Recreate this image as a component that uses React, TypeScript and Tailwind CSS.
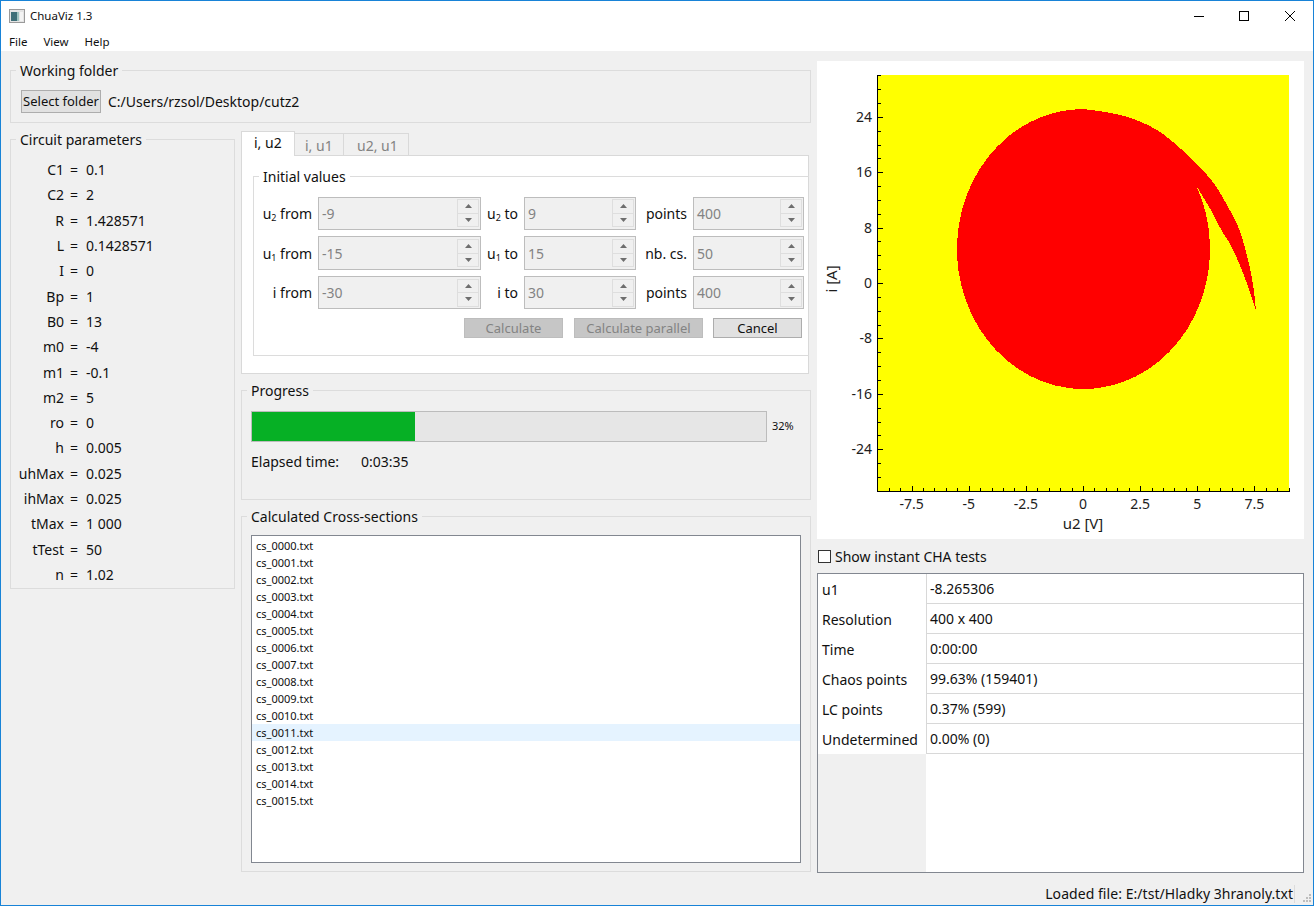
import React from 'react';

const FONT = "font-['Noto_Sans',sans-serif]";

const PARAMS: [string, string][] = [
  ['C1', '0.1'], ['C2', '2'], ['R', '1.428571'], ['L', '0.1428571'], ['I', '0'],
  ['Bp', '1'], ['B0', '13'], ['m0', '-4'], ['m1', '-0.1'], ['m2', '5'], ['ro', '0'],
  ['h', '0.005'], ['uhMax', '0.025'], ['ihMax', '0.025'], ['tMax', '1 000'], ['tTest', '50'], ['n', '1.02'],
];

const INFO: [string, string][] = [
  ['u1', '-8.265306'], ['Resolution', '400 x 400'], ['Time', '0:00:00'],
  ['Chaos points', '99.63% (159401)'], ['LC points', '0.37% (599)'], ['Undetermined', '0.00% (0)'],
];

const FILES = Array.from({ length: 16 }, (_, i) => `cs_${String(i).padStart(4, '0')}.txt`);

// outer edge of the crescent, then back along its inner edge
const OUTER: [number, number][] = [
  [1083.5, 109], [1117, 113], [1147, 124], [1165, 135], [1180, 148], [1193, 160], [1203, 170],
  [1217, 187], [1227, 205], [1237, 223], [1243, 240], [1250, 267], [1254, 290], [1256, 311],
];
const INNER: [number, number][] = [
  [1256, 311], [1252, 297], [1240, 265], [1230, 243], [1222, 232], [1213, 213], [1203, 197], [1196, 185],
];

function smooth(pts: [number, number][]) {
  let d = '';
  for (let i = 1; i < pts.length - 1; i++) {
    const mx = (pts[i][0] + pts[i + 1][0]) / 2;
    const my = (pts[i][1] + pts[i + 1][1]) / 2;
    d += ` Q${pts[i][0]} ${pts[i][1]} ${mx} ${my}`;
  }
  const last = pts[pts.length - 1];
  return `${d} L${last[0]} ${last[1]}`;
}

const REGION = `M1083.5 109${smooth(OUTER)}${smooth(INNER)} A126.5 140 0 1 1 1083.5 109 Z`;

const Group: React.FC<{ title: string; className?: string; children: React.ReactNode }> = ({ title, className, children }) => (
  <fieldset className={`border border-[#dcdcdc] ${className ?? ''}`}>
    <legend className="ml-[5px] px-[4px] h-[16px] leading-[18px]">{title}</legend>
    {children}
  </fieldset>
);

const SpinBox: React.FC<{ value: string; className: string }> = ({ value, className }) => (
  <div className={`flex items-center justify-between border border-[#bdbdbd] bg-[#f0f0f0] pl-[3px] pr-[1px] text-[#838383] ${className}`}>
    <span>{value}</span>
    <div className="flex flex-col w-[22px] h-[28px] border border-[#dedede]">
      <div className="flex-1 flex items-center justify-center border-b border-[#dedede]">
        <svg width="7" height="4" viewBox="0 0 7 4"><path d="M3.5 0 L7 4 L0 4 Z" fill="#6e6e6e" /></svg>
      </div>
      <div className="flex-1 flex items-center justify-center">
        <svg width="7" height="4" viewBox="0 0 7 4"><path d="M0 0 L7 0 L3.5 4 Z" fill="#6e6e6e" /></svg>
      </div>
    </div>
  </div>
);

const SpinLabel: React.FC<{ className: string; children: React.ReactNode }> = ({ className, children }) => (
  <div className={`text-right pr-[6px] whitespace-nowrap ${className}`}>{children}</div>
);

const Sub: React.FC<{ n: number }> = ({ n }) => <sub className="text-[9px]">{n}</sub>;

const Plot: React.FC = () => {
  const px = (v: number) => 1083 + v * 22.85;
  const py = (v: number) => 283 - v * 6.925;
  const xMinor = Array.from({ length: 37 }, (_, i) => -9 + i * 0.5);
  const yMinor = Array.from({ length: 31 }, (_, i) => -30 + i * 2);
  const xMajor = [-7.5, -5, -2.5, 0, 2.5, 5, 7.5];
  const yMajor = [24, 16, 8, 0, -8, -16, -24];
  return (
    <svg width="487" height="478" viewBox="817 61 487 478" className="block bg-white">
      <rect x="878" y="75" width="411" height="416" fill="#ffff00" />
      <path shapeRendering="crispEdges" fill="#ff0000" d={REGION} />
      <g fill="#000000" shapeRendering="crispEdges">
        <rect x="877" y="75" width="1" height="417" />
        <rect x="877" y="491" width="413" height="1" />
        {yMinor.map((v) => (
          <rect key={v} x="878" y={Math.round(py(v))} width={v % 8 === 0 ? 5 : 3} height="1" />
        ))}
        {xMinor.map((v) => (
          <rect key={v} x={Math.round(px(v))} y={v % 2.5 === 0 ? 486 : 488} width="1" height={v % 2.5 === 0 ? 5 : 3} />
        ))}
      </g>
      <g fill="#1c1c1c" fontSize="14">
        {yMajor.map((v) => (
          <text key={v} x="872" y={py(v) + 5} textAnchor="end">{v}</text>
        ))}
        {xMajor.map((v) => (
          <text key={v} x={px(v)} y="509" textAnchor="middle">{v}</text>
        ))}
        <text x="1083" y="529" textAnchor="middle" fontSize="15">u2 [V]</text>
        <text transform="translate(837 279) rotate(-90)" textAnchor="middle" fontSize="15">i [A]</text>
      </g>
    </svg>
  );
};

export default function App() {
  return (
    <div className={`${FONT} w-[1314px] h-[906px] flex flex-col border border-[#1883d7] bg-[#f0f0f0] text-[14px] text-[#101010] overflow-hidden`}>
      {/* Title bar */}
      <div className="h-[29px] bg-white flex items-center pl-[8px]">
        <svg width="16" height="14" viewBox="0 0 16 14" className="mr-[5px]">
          <rect x="0.5" y="0.5" width="15" height="13" fill="#e4e4e4" stroke="#9a9a9a" />
          <rect x="2" y="3" width="6" height="9" fill="#3f6f78" />
          <rect x="8" y="3" width="2" height="9" fill="#9fc3c0" />
          <rect x="11" y="3" width="3" height="9" fill="#f4f4f4" />
        </svg>
        <span className="text-[11.5px]">ChuaViz 1.3</span>
        <div className="ml-auto flex items-center">
          <svg width="10" height="10" viewBox="0 0 10 10" className="mr-[35px]"><rect x="0" y="5" width="10" height="1" fill="#000" /></svg>
          <svg width="10" height="10" viewBox="0 0 10 10" className="mr-[36px]"><rect x="0.5" y="0.5" width="9" height="9" fill="none" stroke="#000" /></svg>
          <svg width="10" height="10" viewBox="0 0 10 10" className="mr-[18px]"><path d="M0 0 L10 10 M10 0 L0 10" stroke="#000" fill="none" /></svg>
        </div>
      </div>
      {/* Menu */}
      <div className="h-[21px] bg-white flex items-center pl-[8px] pt-[3px] gap-[16px] text-[11.5px]">
        <span>File</span>
        <span>View</span>
        <span>Help</span>
      </div>

      <div className="flex-1 flex pl-[9px] gap-[6px]">
        <div className="w-[801px] pt-[11px] flex flex-col gap-[8px]">
          <Group title="Working folder" className="h-[61px]">
            <div className="flex items-center gap-[7px] pl-[10px] pt-[12px]">
              <button className="w-[80px] h-[23px] border border-[#adadad] bg-[#e1e1e1] text-[13px] leading-none">Select folder</button>
              <span>C:/Users/rzsol/Desktop/cutz2</span>
            </div>
          </Group>

          <div className="flex gap-[6px]">
            <Group title="Circuit parameters" className="w-[225px] h-[458px]">
              <div className="pt-[10px]">
                {PARAMS.map(([name, value]) => (
                  <div key={name} className="flex items-center h-[25.3px]">
                    <span className="w-[53px] text-right">{name}</span>
                    <span className="ml-[6px] mr-[8px]">=</span>
                    <span>{value}</span>
                  </div>
                ))}
              </div>
            </Group>

            <div className="w-[570px] flex flex-col gap-[8px]">
              <div>
                {/* Tabs */}
                <div className="flex items-end h-[24px]">
                  <div className="w-[54px] h-[25px] bg-white border border-b-0 border-[#d9d9d9] pl-[12px] leading-[22px] -mb-px z-10">i, u2</div>
                  <div className="w-[49px] h-[22px] bg-[#f0f0f0] border border-l-0 border-b-0 border-[#d9d9d9] pl-[10px] leading-[23px] text-[#838383]">i, u1</div>
                  <div className="w-[65px] h-[22px] bg-[#f0f0f0] border border-l-0 border-b-0 border-[#d9d9d9] pl-[13px] leading-[23px] text-[#838383]">u2, u1</div>
                </div>
                <div className="w-[568px] h-[219px] bg-white border border-[#d9d9d9] pl-[11px] pt-[12px]">
                  <Group title="Initial values" className="w-[556px] h-[188px] border-r-0">
                    <div className="pt-[12px] flex flex-col">
                      <div className="flex items-center h-[34px]">
                        <SpinLabel className="w-[64px]">u<Sub n={2} /> from</SpinLabel>
                        <SpinBox value="-9" className="w-[163px] h-[33px]" />
                        <SpinLabel className="w-[43px]">u<Sub n={2} /> to</SpinLabel>
                        <SpinBox value="9" className="w-[112px] h-[33px]" />
                        <SpinLabel className="w-[57px]">points</SpinLabel>
                        <SpinBox value="400" className="w-[111px] h-[33px]" />
                      </div>
                      <div className="flex items-center h-[34px] mt-[6px]">
                        <SpinLabel className="w-[64px]">u<Sub n={1} /> from</SpinLabel>
                        <SpinBox value="-15" className="w-[163px] h-[34px]" />
                        <SpinLabel className="w-[43px]">u<Sub n={1} /> to</SpinLabel>
                        <SpinBox value="15" className="w-[112px] h-[34px]" />
                        <SpinLabel className="w-[57px]">nb. cs.</SpinLabel>
                        <SpinBox value="50" className="w-[111px] h-[34px]" />
                      </div>
                      <div className="flex items-center h-[33px] mt-[6px]">
                        <SpinLabel className="w-[64px]">i from</SpinLabel>
                        <SpinBox value="-30" className="w-[163px] h-[33px]" />
                        <SpinLabel className="w-[43px]">i to</SpinLabel>
                        <SpinBox value="30" className="w-[112px] h-[33px]" />
                        <SpinLabel className="w-[57px]">points</SpinLabel>
                        <SpinBox value="400" className="w-[111px] h-[33px]" />
                      </div>
                      <div className="flex h-[20px] mt-[9px] pl-[210px] gap-[11px] text-[13px]">
                        <button className="w-[99px] border border-[#bdbdbd] bg-[#c6c6c6] text-[#838383] leading-none">Calculate</button>
                        <button className="w-[129px] border border-[#bdbdbd] bg-[#c6c6c6] text-[#838383] leading-none">Calculate parallel</button>
                        <button className="w-[89px] border border-[#adadad] bg-[#e1e1e1] leading-none -ml-px">Cancel</button>
                      </div>
                    </div>
                  </Group>
                </div>
              </div>

              <Group title="Progress" className="h-[118px]">
                <div className="pl-[9px] pt-[13px]">
                  <div className="flex items-center">
                    <div className="w-[516px] h-[31px] border border-[#bcbcbc] bg-[#e6e6e6]">
                      <div className="w-[163px] h-full bg-[#06b025]" />
                    </div>
                    <span className="ml-[5px] text-[11px]">32%</span>
                  </div>
                  <div className="flex h-[19px] mt-[10px] leading-[19px]">
                    <span className="w-[110px]">Elapsed time:</span>
                    <span>0:03:35</span>
                  </div>
                </div>
              </Group>

              <Group title="Calculated Cross-sections" className="h-[364px]">
                <div className="ml-[9px] mt-[11px] w-[550px] h-[328px] bg-white border border-[#828790] pt-[1px] text-[11px]">
                  {FILES.map((f) => (
                    <div key={f} className={`h-[17px] leading-[17px] pl-[4px] ${f === 'cs_0011.txt' ? 'bg-[#e5f3ff]' : ''}`}>{f}</div>
                  ))}
                </div>
              </Group>
            </div>
          </div>
        </div>

        <div className="w-[487px] pt-[10px] flex flex-col">
          <Plot />
          <div className="h-[17px] mt-[9px] flex items-center">
            <div className="w-[13px] h-[13px] ml-px border border-[#333333] bg-white" />
            <span className="ml-[4px]">Show instant CHA tests</span>
          </div>
          <div className="mt-[8px] h-[300px] flex flex-col bg-white border border-[#828790]">
            {INFO.map(([k, v]) => (
              <div key={k} className="flex h-[30px]">
                <div className="w-[108px] pl-[4px] leading-[31px]">{k}</div>
                <div className="flex-1 pl-[3px] leading-[29px] border-l border-b border-[#d8d8d8]">{v}</div>
              </div>
            ))}
            <div className="flex-1 flex">
              <div className="w-[108px] bg-[#f0f0f0]" />
              <div className="flex-1" />
            </div>
          </div>
        </div>
      </div>

      {/* Status bar */}
      <div className="h-[20px] flex items-center justify-end">
        <span className="pr-[1px] mb-[2px] border-r border-[#dcdcdc] leading-[18px] tracking-[0.05px]">Loaded file: E:/tst/Hladky 3hranoly.txt</span>
        <svg width="12" height="12" viewBox="0 0 12 12" className="ml-[5px] mr-[1px] mt-[4px]" fill="#bdbdbd">
          <rect x="9" y="9" width="2" height="2" /><rect x="6" y="9" width="2" height="2" /><rect x="3" y="9" width="2" height="2" />
          <rect x="9" y="6" width="2" height="2" /><rect x="6" y="6" width="2" height="2" /><rect x="9" y="3" width="2" height="2" />
        </svg>
      </div>
    </div>
  );
}
